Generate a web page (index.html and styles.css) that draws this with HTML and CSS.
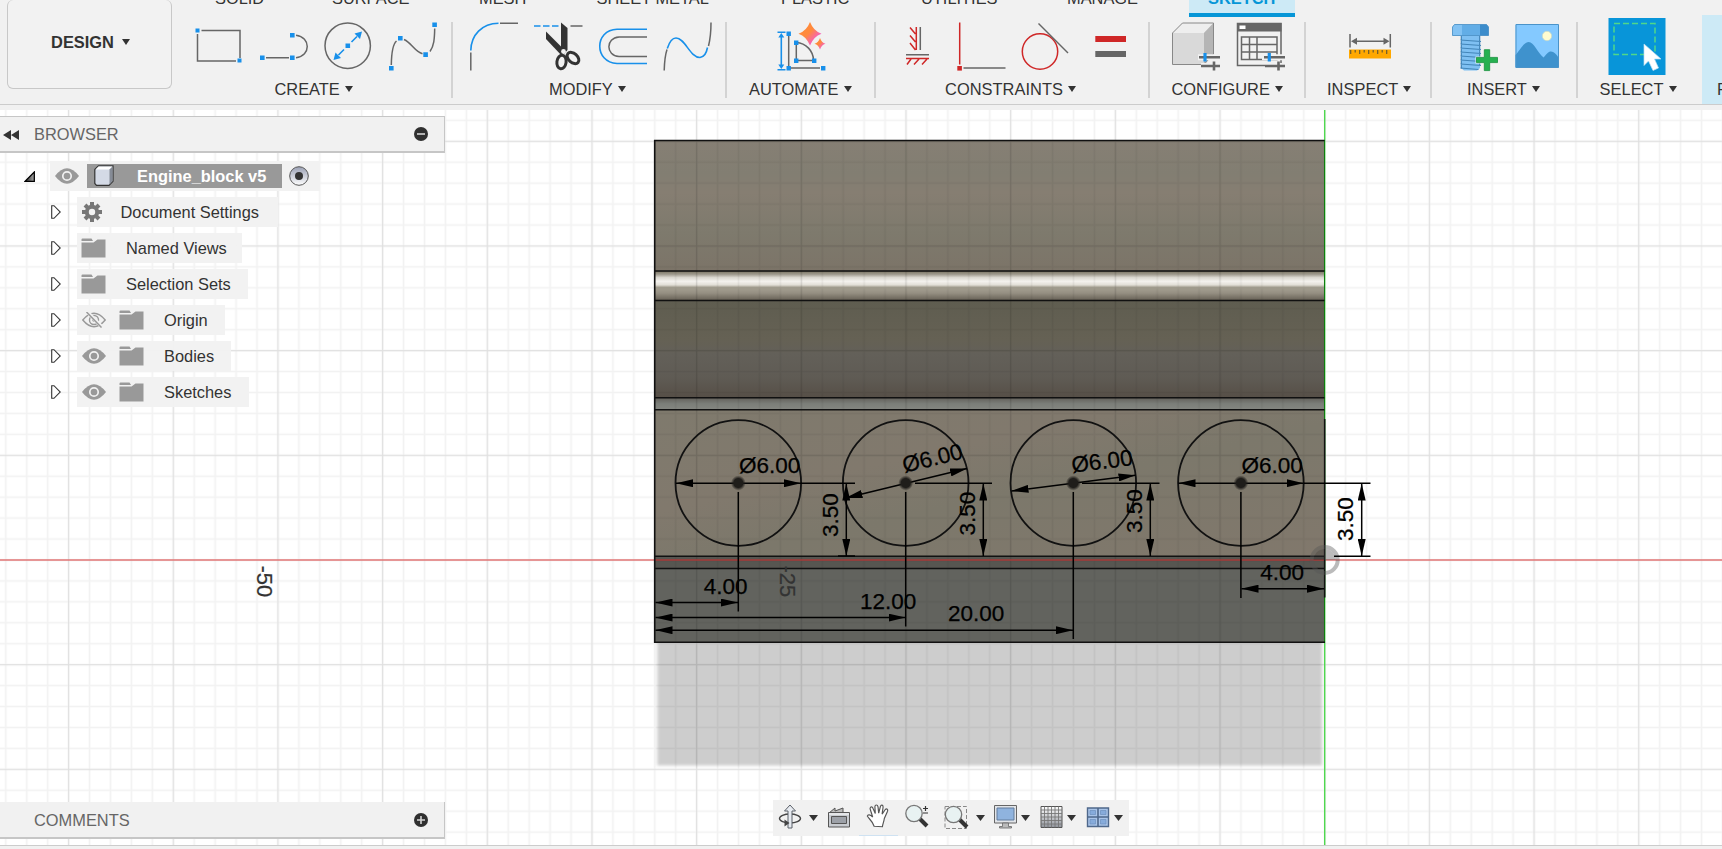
FILE: index.html
```html
<!DOCTYPE html>
<html lang="en">
<head>
<meta charset="utf-8">
<title>Engine_block v5</title>
<link rel="stylesheet" href="styles.css">
</head>
<body>
<header class="toolbar">
  <div class="workspace">
    <button class="workspace-btn">DESIGN<i class="caret"></i></button>
  </div>
  <div class="ribbon">
    <nav class="tabs">
      <span class="tab t-solid">SOLID</span><span class="tab t-surface">SURFACE</span><span class="tab t-mesh">MESH</span><span class="tab t-sheet">SHEET METAL</span><span class="tab t-plastic">PLASTIC</span><span class="tab t-util">UTILITIES</span><span class="tab t-manage">MANAGE</span><span class="tab t-sketch">SKETCH</span>
    </nav>
    <div class="groups">
      <section class="group g-create">
        <div class="icons">
          <svg class="ic65" viewBox="187 17 65 60"><path d="M201.500 30.500H240V58M236 61H197.500V34" class="g"/><path d="M195.500 28.500h4v4h-4zM237.500 58.500h4v4h-4z" class="bf"/></svg>
          <svg class="ic65" viewBox="252 17 65 60"><path d="M266 57.700H289M296 57.700C311 56 311 37 296 35.200" class="g"/><path d="M260 55.500h4.600v4.600H260zM290 55.500h4.600v4.600H290zM290 33h4.600v4.600H290z" class="bf"/></svg>
          <svg class="ic65" viewBox="317 17 65 60"><circle cx="347.700" cy="45.700" r="22.700" class="g"/><path d="M351.500 42L357 36.500M344 49.500L338.500 55" class="b"/><path d="M345.500 43.500h4.600v4.600h-4.600zM362 31.500l-7.500 2 5.500 5.500zM333.500 60l7.500-2-5.500-5.500z" class="bf"/></svg>
          <svg class="ic65" viewBox="382 17 65 60"><path d="M391.300 65C391.500 52 393 44 396.500 41M404 39.500C412 43 414 51 422.500 53.700M430 51.500C434 46 434.500 39 434.700 28.500" class="g"/><path d="M389 66h4.600v4.600H389zM398 36h4.600v4.600H398zM423.300 52.300h4.600v4.600h-4.600zM432.300 22.500h4.600v4.600h-4.600z" class="bf"/></svg>
        </div>
        <div class="label">CREATE<i class="caret"></i></div>
      </section>
      <section class="group g-modify">
        <div class="icons">
          <svg class="ic65" viewBox="461 17 65 60"><path d="M470.800 50.500C471 35 482 23.300 498.500 23.200" class="b"/><path d="M500 23.200h18M470.800 52.500V70.500" class="g"/></svg>
          <svg class="ic65" viewBox="526 17 65 60"><path d="M534 26h26" class="b" stroke-dasharray="6.500 2.500"/><path d="M570.500 26h12" class="g"/><path d="M561 22.500l6.500 5.500V50L564 54l-3-2z" class="k"/><path d="M546 31.500l18 18-2 6.500-16-17z" class="k"/><circle cx="563.500" cy="51.500" r="2.400" fill="#f1f1f1"/><g fill="none" stroke="#333" stroke-width="3"><ellipse cx="561.500" cy="62" rx="4.600" ry="6.800" transform="rotate(8 561.500 62)"/><ellipse cx="573" cy="58" rx="4.500" ry="6.800" transform="rotate(-48 573 58)"/></g></svg>
          <svg class="ic65" viewBox="591 17 65 60"><path d="M647 29.300H617C594 30 594 62.500 617 63.500H647" class="b"/><path d="M647 37H619C605.500 38 605.500 55.500 619 56.500H647" class="g"/></svg>
          <svg class="ic65" viewBox="656 17 65 60"><path d="M667.300 48.500C670 40 673 38 676 38C685 38 690 57.500 700 57.500C704 57 706.500 53 707.500 47.500" class="b"/><path d="M664.200 70.500C664.500 60 665.500 54 667 49.500M708.500 46C710.500 38 711 32 711 22.500" class="g"/></svg>
        </div>
        <div class="label">MODIFY<i class="caret"></i></div>
      </section>
      <section class="group g-automate">
        <div class="icons">
          <svg class="ic64" viewBox="769 17 64 60"><defs><linearGradient id="spark" x1="0" y1="0" x2="1" y2="1"><stop offset=".45" stop-color="#ff8a3c"/><stop offset=".75" stop-color="#f65fc0"/></linearGradient></defs><path d="M788.700 36V68H820M796.300 42.500V60.500H813.500C813.500 51 806 43 796.300 42.500" class="g"/><path d="M777.500 32.300h8M777.500 69.700h8M781.300 36v30" class="b"/><path d="M786.500 31.500h4.400v4.400h-4.400zM786.500 66h4.400v4.400h-4.400zM821 66h4.400v4.400H821zM794 40.500h4.400v4.400H794zM794 58.500h4.400v4.400H794zM812 58.500h4.400v4.400H812zM781.300 33l-3 4.500h6zM781.300 69l-3-4.500h6z" class="bf"/><path d="M810 22Q813.500 31 821.500 33.700Q813.500 36.500 810 45.500Q806.500 36.500 798.500 33.700Q806.500 31 810 22z" fill="url(#spark)"/><path d="M820 38Q821.500 42.500 825.500 43.700Q821.500 45 820 49.500Q818.500 45 814.500 43.700Q818.500 42.500 820 38z" fill="url(#spark)"/></svg>
        </div>
        <div class="label">AUTOMATE<i class="caret"></i></div>
      </section>
      <section class="group g-constraints">
        <div class="icons">
          <svg class="ic64" viewBox="885 17 64 60"><path d="M916.300 27V50M915.500 34l-5.500-6.500M915.500 42l-5.500-6.500M915.500 50l-5.500-7M906 58.500H929M911 59l-4 5.500M919 59l-5 5.500M927 59l-5 5.500" class="r"/><path d="M920.300 27V50M906 54.700H929" class="g"/></svg>
          <svg class="ic64" viewBox="949 17 64 60"><path d="M959.700 22.500V64.500" class="r"/><path d="M957.300 66h4.600v4.600h-4.600z" fill="#cf2727"/><path d="M963.500 68H1005.500" class="g"/></svg>
          <svg class="ic64" viewBox="1013 17 64 60"><circle cx="1040" cy="51.500" r="17.700" class="r"/><path d="M1038.500 23.500L1068 53" class="g"/></svg>
          <svg class="ic64" viewBox="1077 17 64 60"><path d="M1095.300 36H1126v6h-30.700z" fill="#cf2727"/><path d="M1095.300 51H1126v6h-30.700z" fill="#666"/></svg>
        </div>
        <div class="label">CONSTRAINTS<i class="caret"></i></div>
      </section>
      <section class="group g-configure">
        <div class="icons">
          <svg class="ic64" viewBox="1164 17 64 60"><path d="M1172.500 33l10-10h31v31l-9.500 10.500h-31.500z" fill="#d9d9d9"/><path d="M1172.500 33l10-10h31L1204 33z" fill="#eee"/><path d="M1213.500 23v31l-9.500 10V33z" fill="#b5b5b5"/><path d="M1172.500 33l10-10h31v31l-9.500 10.500h-31.500z" fill="none" stroke="#888"/><path d="M1198 57.300h23M1201 66h20" stroke="#f1f1f1" stroke-width="6"/><path d="M1199 57.300h21M1201 66h19M1214 61.500v9" stroke="#666" stroke-width="2.600"/><path d="M1205 53v8.500" stroke="#1890ea" stroke-width="3.200"/></svg>
          <svg class="ic64" viewBox="1228 17 64 60"><rect x="1237.500" y="23.500" width="43.500" height="42" class="g"/><path d="M1237 23h44.500v8.500H1237z" fill="#666"/><path d="M1239.500 25.500h6v3.500h-6z" fill="#fff"/><path d="M1241.500 37H1277v22.500h-35.500zM1241.500 44.500H1277M1241.500 52H1277M1249.500 37v22.500M1257 37v22.500" class="g"/><path d="M1262 57.300h23M1265 66h20" stroke="#f1f1f1" stroke-width="6"/><path d="M1264 57.300h21M1265 66h20M1278.500 61.500v9" stroke="#666" stroke-width="2.600"/><path d="M1269.300 53v8.500" stroke="#1890ea" stroke-width="3.200"/></svg>
        </div>
        <div class="label">CONFIGURE<i class="caret"></i></div>
      </section>
      <section class="group g-inspect">
        <div class="icons">
          <svg class="ic64" viewBox="1337 17 64 60"><path d="M1350 34v13.500M1390.300 34v13.500M1354 41.300h32" class="g"/><path d="M1351 41.300l6-3.500v7zM1389.500 41.300l-6-3.500v7z" fill="#666"/><path d="M1349 49.500h42v9h-42z" fill="#ffa800"/><path d="M1350.700 50v4M1355.200 50v2.500M1359.700 50v4M1364.200 50v2.500M1368.700 50v4M1373.200 50v2.500M1377.700 50v4M1382.200 50v2.500M1386.700 50v4" stroke="#6b5a30" stroke-width="1.200"/></svg>
        </div>
        <div class="label">INSPECT<i class="caret"></i></div>
      </section>
      <section class="group g-insert">
        <div class="icons">
          <svg class="ic64" viewBox="1443 17 64 60"><path d="M1461 35h19v33l-3 2.500h-13l-3-2.500z" fill="#7fc0f2"/><path d="M1452.500 27l2-2.500h32l2 2.500v8.500h-36z" fill="#62ade6"/><path d="M1452.500 27l2-2.500h7.500v11h-9.500z" fill="#82c2f3"/><path d="M1480 24.500h6.500l2 2.500v8.500h-8.500z" fill="#3c8ccb"/><path d="M1452.500 27l2-2.500h32l2 2.500v8.500h-36z" fill="none" stroke="#4a8fc4" stroke-width=".8"/><path d="M1460.500 40l20.500 1.500M1460.500 44l20.500 1.500M1460.500 48l20.500 1.500M1460.500 52l20.500 1.500M1460.500 56l20.500 1.500M1460.500 60l20.500 1.500M1460.500 64l20.500 1.500M1460.500 68l18 1.500M1461.300 36v33M1479.700 36v30" stroke="#4385b8" stroke-width="1.200" fill="none"/><path d="M1483.500 48.500h7v8h8v7h-8v8h-7v-8h-8v-7h8z" fill="#f1f1f1"/><path d="M1484.300 49.700h5.400v7.700h7.800v5.200h-7.800v8h-5.400v-8h-7.800v-5.200h7.800z" fill="#26b050" stroke="#15903b" stroke-width=".8"/></svg>
          <svg class="ic64" viewBox="1507 17 64 60"><path d="M1515.500 24.500H1558.500V67.500H1515.500z" fill="#84c9ff"/><path d="M1515.500 55C1521 49 1524 42 1528.700 42C1534 42 1537 52 1543.500 57.500C1547 54 1548 51.500 1551 51.500C1554 51.500 1556 54 1558.500 57.500V67.500H1515.500z" fill="#3f92cd"/><path d="M1516 24.500H1558.500V67.500H1516z" fill="none" stroke="#4a93c9"/><circle cx="1547" cy="36" r="4.700" fill="#fffcd0" stroke="#c6d9c6" stroke-width=".7"/></svg>
        </div>
        <div class="label">INSERT<i class="caret"></i></div>
      </section>
      <section class="group g-select">
        <div class="icons">
          <svg class="ic64" viewBox="1605 17 64 60"><path d="M1608.500 18h57v57h-57z" fill="#0895d9"/><path d="M1614 23.500h41v31h-41z" fill="none" stroke="#4fd889" stroke-width="1.500" stroke-dasharray="6 3"/><path d="M1644 44V65.500L1648.500 61L1653 70.500L1658.500 68L1654.500 59H1661z" fill="#fff" stroke="#b9def2" stroke-width=".7"/></svg>
        </div>
        <div class="label">SELECT<i class="caret"></i></div>
      </section>
      <section class="finish"><div class="label">FINISH</div></section>
    </div>
  </div>
</header>

<main class="viewport">
  <svg class="scene" viewBox="0 110 1722 735">
    <defs>
      <pattern id="minor" x="1314.200" y="549.500" width="20.935" height="20.935" patternUnits="userSpaceOnUse"><path d="M10.500 0V20.935M0 10.500H20.935" stroke="#000" stroke-opacity=".052" stroke-width="1.600"/></pattern>
      <pattern id="major" x="1272.300" y="507.600" width="104.675" height="104.675" patternUnits="userSpaceOnUse"><path d="M52.400 0V104.675M0 52.400H104.675" stroke="#000" stroke-opacity=".075" stroke-width="1.200"/></pattern>
      <linearGradient id="topFace" x2="0" y2="1"><stop stop-color="#867f74"/><stop offset=".25" stop-color="#827e72"/><stop offset=".4" stop-color="#867e72"/><stop offset=".7" stop-color="#7e7a6d"/><stop offset="1" stop-color="#7c7468"/></linearGradient>
      <linearGradient id="shine" x2="0" y2="1"><stop stop-color="#77715f"/><stop offset=".12" stop-color="#a39e92"/><stop offset=".22" stop-color="#dad7cf"/><stop offset=".35" stop-color="#f4f2ee"/><stop offset=".47" stop-color="#e2dfd7"/><stop offset=".55" stop-color="#a7a294"/><stop offset=".75" stop-color="#958f82"/><stop offset="1" stop-color="#655f54"/></linearGradient>
      <linearGradient id="midFace" x2="0" y2="1"><stop stop-color="#5f5d50"/><stop offset=".4" stop-color="#656154"/><stop offset=".55" stop-color="#636059"/><stop offset=".8" stop-color="#5f5b54"/><stop offset="1" stop-color="#564f47"/></linearGradient>
      <linearGradient id="band" x2="0" y2="1"><stop stop-color="#625f59"/><stop offset=".5" stop-color="#7b7e79"/><stop offset="1" stop-color="#858781"/></linearGradient>
      <linearGradient id="lowFace" x2="1" y2="1"><stop stop-color="#7f7a6d"/><stop offset=".35" stop-color="#81796d"/><stop offset=".55" stop-color="#7c786b"/><stop offset="1" stop-color="#81786c"/></linearGradient>
      <filter id="soft" x="-5%" y="-10%" width="110%" height="120%"><feGaussianBlur stdDeviation="1.800"/></filter>
      <marker id="arr" viewBox="0 0 17 8" refX="17" refY="4" markerWidth="17" markerHeight="8" markerUnits="userSpaceOnUse" orient="auto-start-reverse"><path d="M0 0L17 4L0 8z"/></marker>
      <radialGradient id="dot"><stop offset=".6" stop-color="#1f1d1a"/><stop offset="1" stop-color="#1f1d1a" stop-opacity="0"/></radialGradient>
    </defs>
    <path d="M657.300 636H1322V765.500H657.300z" fill="#cdcdcd" filter="url(#soft)"/>
    <path d="M655 140.500H1324.500V271H655z" fill="url(#topFace)"/>
    <path d="M655 271H1324.500V300.500H655z" fill="url(#shine)"/>
    <path d="M655 300.500H1324.500V397.500H655z" fill="url(#midFace)"/>
    <path d="M655 397.500H1324.500V410H655z" fill="url(#band)"/>
    <path d="M655 410H1324.500V556H655z" fill="url(#lowFace)"/>
    <path d="M655 556H1324.500V568.500H655z" fill="#575651"/>
    <path d="M655 568.500H1324.500V642H655z" fill="#62635e"/>
    <path d="M0 110H1722V845H0z" fill="url(#minor)"/>
    <path d="M0 110H1722V845H0z" fill="url(#major)"/>
    <path d="M0 560H1722" stroke="#e02c2c" stroke-opacity=".45" stroke-width="2"/>
    <path d="M1324.700 110V845" stroke="#4fd84f" stroke-width="1.400"/>
    <path d="M1324.500 140V419M1324.500 597V642" stroke="#0e7c0e" stroke-width="1"/>
    <g fill="none" stroke="#111" stroke-width="1.600">
      <path d="M1324.500 140.500H654.700V642.300H1325"/>
      <path d="M655 271H1324.500M655 300.500H1324.500M655 397.800H1324.500M655 409.800H1324.500M655 556.200H1324.500M655 568.500H1324.500" stroke-width="1.500"/>
      <path d="M1324.700 419V597.500"/>
      <g stroke-width="1.800"><circle cx="738.300" cy="483" r="62.800"/><circle cx="905.700" cy="483" r="62.800"/><circle cx="1073.300" cy="483" r="62.800"/><circle cx="1240.900" cy="483" r="62.800"/></g>
    </g>
    <circle cx="1324.700" cy="560" r="13" fill="none" stroke="#555" stroke-opacity=".4" stroke-width="4"/>
    <path d="M1324.700 560V549A11 11 0 0 1 1335.700 560z" fill="#555" fill-opacity=".4"/>
    <path d="M1324.700 560H1313.700A11 11 0 0 1 1324.700 549z" fill="#333" fill-opacity=".4"/>
    <g fill="none" stroke="#000" stroke-width="1.500">
      <path d="M801 483.200H855M915 483.200H992M1082 483.200H1159.500M1304 483.200H1370.500M838 556H855M1334 556.200H1370.500"/>
      <path d="M738.300 492V611.500M905.700 492V626.500M1073.300 492V639M1240.900 492V598"/>
      <g marker-start="url(#arr)" marker-end="url(#arr)">
        <path d="M676 483.200H801"/><path d="M845.500 498L967 468.500"/><path d="M1011.500 491L1135.500 475.300"/><path d="M1178.500 483.200H1303.500"/>
        <path d="M846.300 483.500V556"/><path d="M983.300 483.500V556"/><path d="M1150.300 483.500V556"/><path d="M1361.700 483.500V556"/>
        <path d="M655.500 602.600H738"/><path d="M655.500 617.600H905.500"/><path d="M655.500 630.200H1073"/><path d="M1241.500 588.700H1324"/>
      </g>
    </g>
    <circle cx="738.300" cy="483" r="7.500" fill="url(#dot)"/><circle cx="905.700" cy="483" r="7.500" fill="url(#dot)"/><circle cx="1073.300" cy="483" r="7.500" fill="url(#dot)"/><circle cx="1240.900" cy="483" r="7.500" fill="url(#dot)"/>
    <g class="dim">
      <text x="739" y="473.300">Ø6.00</text>
      <text transform="translate(904.500 472.800) rotate(-13.800)">Ø6.00</text>
      <text transform="translate(1072.500 472.800) rotate(-7.300)">Ø6.00</text>
      <text x="1241.400" y="473.300">Ø6.00</text>
      <text transform="translate(838 537) rotate(-90)">3.50</text>
      <text transform="translate(974.600 535.500) rotate(-90)">3.50</text>
      <text transform="translate(1142 533) rotate(-90)">3.50</text>
      <text transform="translate(1352.700 541) rotate(-90)">3.50</text>
      <text x="703.800" y="594">4.00</text><text x="860" y="609.300">12.00</text><text x="948" y="621.300">20.00</text><text x="1260.300" y="580.300">4.00</text>
    </g>
    <g class="ruler"><text transform="translate(256.700 565.500) rotate(90)">-50</text><text transform="translate(780.200 565.500) rotate(90)">-25</text></g>
  </svg>

  <aside class="panels">
    <div class="panel-bar browser"><svg class="rewind" viewBox="0 0 16 10"><path d="M8 0v10L0 5zM16 0v10L8 5z" fill="#333"/></svg><span>BROWSER</span><svg class="round" viewBox="0 0 14 14"><circle cx="7" cy="7" r="7" fill="#303030"/><path d="M3 7h8" stroke="#d5d5d5" stroke-width="1.600"/></svg></div>
    <div class="tree">
      <div class="row root">
        <svg class="tri" viewBox="0 0 11 11"><defs><linearGradient id="tg"><stop stop-color="#222"/><stop offset="1" stop-color="#aaa"/></linearGradient></defs><path d="M10.300 1V10.300H1z" fill="url(#tg)" stroke="#000" stroke-width="1.300"/></svg>
        <div class="chip">
          <svg class="eye" viewBox="0 0 24 16"><use href="#eye"/></svg>
          <div class="doc"><svg class="cube" viewBox="0 0 20 21"><path d="M.8 4.500L4.500.8H19v15.500l-4 4H2.500L.8 18.500z" fill="#d4dae6" stroke="#333" stroke-width="1.200"/><path d="M1.500 4.500L4.500 1.500h14L15.500 4.500z" fill="#fff"/><path d="M18.500 1.500v14.500l-3 3.500V4.500z" fill="#858b96"/></svg><b>Engine_block v5</b></div>
          <svg class="radio" viewBox="0 0 20 20"><defs><linearGradient id="rg" x2="0" y2="1"><stop stop-color="#9aa0b4"/><stop offset="1" stop-color="#fff"/></linearGradient></defs><circle cx="10" cy="10" r="9.300" fill="url(#rg)" stroke="#555"/><circle cx="10" cy="10" r="4" fill="#333"/></svg>
        </div>
      </div>
      <div class="row"><svg class="exp" viewBox="0 0 10 14"><use href="#exp"/></svg><div class="chip c1"><svg class="gear" viewBox="-10 -10 20 20"><circle r="5.200" fill="none" stroke="#777" stroke-width="4"/><path d="M0-10V-6M0 6V10M-10 0H-6M6 0H10M-7-7L-4.500-4.500M7 7L4.500 4.500M-7 7L-4.500 4.500M7-7L4.500-4.500" stroke="#777" stroke-width="4"/></svg><span>Document Settings</span></div></div>
      <div class="row"><svg class="exp" viewBox="0 0 10 14"><use href="#exp"/></svg><div class="chip c2"><svg class="folder" viewBox="0 0 25 20"><use href="#folder"/></svg><span>Named Views</span></div></div>
      <div class="row"><svg class="exp" viewBox="0 0 10 14"><use href="#exp"/></svg><div class="chip c3"><svg class="folder" viewBox="0 0 25 20"><use href="#folder"/></svg><span>Selection Sets</span></div></div>
      <div class="row"><svg class="exp" viewBox="0 0 10 14"><use href="#exp"/></svg><div class="chip c4"><svg class="eye" viewBox="0 0 24 16"><path d="M.8 8Q12-5.500 23.200 8Q12 21.500 .8 8z" fill="none" stroke="#999" stroke-width="1.400"/><circle cx="12" cy="8" r="4.500" fill="none" stroke="#999" stroke-width="1.400"/><circle cx="12" cy="8" r="1.800" fill="#999"/><path d="M5.500 0L20.500 15.500" stroke="#f1f1f1" stroke-width="3.500"/><path d="M4.500 0L19.500 15.500" stroke="#999" stroke-width="1.500"/></svg><svg class="folder f2" viewBox="0 0 25 20"><use href="#folder"/></svg><span>Origin</span></div></div>
      <div class="row"><svg class="exp" viewBox="0 0 10 14"><use href="#exp"/></svg><div class="chip c5"><svg class="eye" viewBox="0 0 24 16"><use href="#eye"/></svg><svg class="folder f2" viewBox="0 0 25 20"><use href="#folder"/></svg><span>Bodies</span></div></div>
      <div class="row"><svg class="exp" viewBox="0 0 10 14"><use href="#exp"/></svg><div class="chip c6"><svg class="eye" viewBox="0 0 24 16"><use href="#eye"/></svg><svg class="folder f2" viewBox="0 0 25 20"><use href="#folder"/></svg><span>Sketches</span></div></div>
    </div>
    <div class="panel-bar comments"><span>COMMENTS</span><svg class="round" viewBox="0 0 14 14"><circle cx="7" cy="7" r="7" fill="#303030"/><path d="M3 7h8M7 3v8" stroke="#d5d5d5" stroke-width="1.600"/></svg></div>
  </aside>

  <div class="navbar">
    <svg width="50" height="36" viewBox="773 800 50 36"><ellipse cx="790" cy="818.500" rx="10.500" ry="4.500" fill="none" stroke="#444" stroke-width="1.400"/><path d="M788 828V811h-3.500l5.500-6 5.500 6H792V828z" fill="#e7ebf1" stroke="#5b6068"/><path d="M784.500 819.500l5 3.500-5 3.500z" fill="#444"/><path d="M809 815h9l-4.500 6z" class="k"/></svg>
    <svg width="36" height="36" viewBox="823 800 36 36"><path d="M829 813l6-5v3l8-3v5" fill="#bbb" stroke="#555"/><path d="M828.500 812.500h21v14.500h-21z" fill="#c9ccd1" stroke="#555"/><path d="M831.500 816.500h15v7h-15z" fill="#9da1a8" stroke="#555"/><path d="M829 814h20" stroke="#fff"/></svg>
    <svg class="hand" width="39" height="36" viewBox="859 800 39 36"><path d="M874 827C872 821 868.500 819.500 867 816.500C867.500 814.500 870 815 872.500 817.500L869.800 809C870 806.500 872 806.500 872.800 808.500L875.200 814L874.800 807C875 804.500 877.500 804.500 878 807L878.700 813.500L880.500 806.500C881.200 804.500 883.500 805 883.200 807.500L882.200 814.500L885.500 809.800C887 808.300 888.500 809.800 887.800 811.500L884.500 819C884 822.500 883 824 882.500 827.500z" fill="#fff" stroke="#555" stroke-width="1.200"/></svg>
    <svg width="38" height="36" viewBox="898 800 38 36"><path d="M920 819l7 7" stroke="#333" stroke-width="4"/><circle cx="914" cy="813.500" r="8.200" fill="#e8f2f2" stroke="#777" stroke-width="1.300"/><path d="M923 808.500h5M925.500 806v5M923 813h5" stroke="#333" stroke-width="1.200"/></svg>
    <svg width="53" height="36" viewBox="936 800 53 36"><path d="M945 806.500h21.500v22H945z" fill="none" stroke="#888" stroke-dasharray="4 2"/><path d="M959 819l8 8" stroke="#333" stroke-width="4"/><circle cx="953.500" cy="814.500" r="8.200" fill="#e8f2f2" stroke="#777" stroke-width="1.300"/><path d="M976 815h9l-4.500 6z" class="k"/></svg>
    <svg width="46" height="36" viewBox="989 800 46 36"><path d="M994.500 805.500h22v17.500h-22z" fill="#e1e4e8" stroke="#666"/><path d="M997 808h17v12h-17z" fill="#8fb3de" stroke="#637c9d"/><path d="M1002.500 823h6v3.500h3v1.500h-12v-1.500h3z" fill="#bbb" stroke="#666" stroke-width=".8"/><path d="M1021 815h9l-4.500 6z" class="k"/></svg>
    <svg width="47" height="36" viewBox="1035 800 47 36"><defs><linearGradient id="ng" x2="0" y2="1"><stop stop-color="#fff"/><stop offset="1" stop-color="#90949c"/></linearGradient></defs><path d="M1041 806.500h21v21h-21z" fill="url(#ng)" stroke="#555"/><path d="M1044.500 806.500v21M1048 806.500v21M1051.500 806.500v21M1055 806.500v21M1058.500 806.500v21M1041 810h21M1041 813.500h21M1041 817h21M1041 820.500h21M1041 824h21" stroke="#777" stroke-width=".9"/><path d="M1067 815h9l-4.500 6z" class="k"/></svg>
    <svg width="47" height="36" viewBox="1082 800 47 36"><path d="M1087.500 808h21v18.500h-21z" fill="#a9c4e8" stroke="#4f688b" stroke-width="1.400"/><path d="M1098 808v18.500M1087.500 817h21" stroke="#4f688b" stroke-width="1.600"/><path d="M1090 810.500h5.500v4H1090zM1100.500 810.500h5.500v4h-5.500zM1090 819.500h5.500v4.500H1090zM1100.500 819.500h5.500v4.500h-5.500z" fill="#86abdb" stroke="#6d8fbd" stroke-width=".7"/><path d="M1114 815h9l-4.500 6z" class="k"/></svg>
  </div>
</main>
<footer class="status"></footer>

<svg class="symbols" width="0" height="0">
  <symbol id="eye" viewBox="0 0 24 16"><path d="M0 8Q12-7.500 24 8Q12 23.500 0 8z" fill="#999"/><circle cx="12" cy="8" r="4.200" fill="none" stroke="#f1f1f1" stroke-width="1.700"/></symbol>
  <symbol id="folder" viewBox="0 0 25 20"><path d="M.5 1.500Q.5.500 1.500.500H10.500L12 3H.5zM.5 4.500H12.500L16.500 1.500H24.500V19.500H.5z" fill="#999"/></symbol>
  <symbol id="exp" viewBox="0 0 10 14"><path d="M.7 .7H3L9.300 7L3 13.300H.7z" fill="#fff" stroke="#333" stroke-width="1.100"/></symbol>
</svg>
</body>
</html>
```
FILE: styles.css
```css
* { box-sizing: border-box; }
body {
  margin: 0;
  width: 1722px;
  height: 849px;
  overflow: hidden;
  display: flex;
  flex-direction: column;
  background: #f1f1f1;
  color: #333;
  font: 16.4px/20px "Liberation Sans", Arial, sans-serif;
}
svg { display: block; flex: none; }
.symbols { position: absolute; }

/* stroke and fill roles shared by the icons */
.g { fill: none; stroke: #666; stroke-width: 1.5; }
.b { fill: none; stroke: #1890ea; stroke-width: 1.6; }
.r { fill: none; stroke: #cf2727; stroke-width: 1.5; }
.bf { fill: #1890ea; }
.k { fill: #333; }

.caret {
  display: inline-block;
  border: 4.5px solid transparent;
  border-width: 6px 4.5px 0;
  border-top-color: #333;
  margin-left: 5px;
  vertical-align: 3px;
}

/* toolbar */
.toolbar { display: flex; height: 110px; flex: none; }
.workspace { width: 172px; height: 105px; border-bottom: 1px solid #ccc; padding-left: 7px; }
.workspace-btn {
  width: 165px;
  height: 89px;
  border: 1px solid #c8c8c8;
  border-top: 0;
  border-radius: 6px;
  background: #f2f2f2;
  color: #333;
  font: bold 16.4px/20px "Liberation Sans", Arial, sans-serif;
  padding: 0 0 5px 2px;
}
.workspace-btn .caret { margin-left: 8px; }
.ribbon { width: 1550px; height: 105px; border-bottom: 1px solid #ccc; display: flex; flex-direction: column; }
.tabs { display: flex; height: 17px; padding-left: 24px; flex: none; }
.tab { padding-left: 19px; line-height: 0; margin-top: -2px; height: 19px; white-space: nowrap; }
.t-solid { width: 117px; }
.t-surface { width: 147px; }
.t-mesh { width: 117.5px; }
.t-sheet { width: 184.5px; }
.t-plastic { width: 140px; }
.t-util { width: 146px; }
.t-manage { width: 141px; }
.t-sketch { width: 106px; background: #cdeaf6; border-bottom: 4px solid #0696d7; color: #0696d7; font-weight: bold; }
.groups { display: flex; height: 87px; }
.group { position: relative; height: 87px; flex: none; }
.group::after { content: ""; position: absolute; right: 0; top: 5px; width: 2px; height: 76px; background: #d3d3d3; }
.g-select::after { display: none; }
.icons { display: flex; height: 60px; }
.ic65 { width: 65px; height: 60px; }
.ic64 { width: 64px; height: 60px; }
.label { margin-top: 2px; white-space: nowrap; }
.g-create { width: 281px; padding-left: 15px; }
.g-create .label { padding-left: 87.5px; }
.g-modify { width: 274px; padding-left: 8px; }
.g-modify .label { padding-left: 88px; }
.g-automate { width: 149px; padding-left: 42px; }
.g-automate .label { margin-left: -20px; }
.g-constraints { width: 274px; padding-left: 9px; }
.g-constraints .label { padding-left: 60px; letter-spacing: .05px; }
.g-configure { width: 156px; padding-left: 14px; }
.g-configure .label { padding-left: 7.5px; }
.g-inspect { width: 126px; padding-left: 31px; }
.g-inspect .label { margin-left: -10px; letter-spacing: .05px; }
.g-insert { width: 146px; padding-left: 11px; }
.g-insert .label { padding-left: 24px; }
.g-select { width: 124px; padding-left: 27px; }
.g-select .label { margin-left: -5.5px; letter-spacing: .05px; }
.finish { width: 22px; background: #cdeaf6; padding: 60px 0 0 15px; overflow: hidden; box-shadow: 0 -2px #cdeaf6; }

/* modelling canvas */
.viewport { position: relative; height: 735px; flex: none; background: #fff; overflow: hidden; }
.scene { position: absolute; inset: 0; width: 1722px; height: 735px; }
.dim { font-size: 22.5px; fill: #000; stroke: #000; stroke-width: .25px; }
.ruler { font-size: 22px; fill: #333; stroke: #333; stroke-width: .2px; }

/* browser and comments panels */
.panels { position: relative; width: 445px; height: 735px; padding: 6px 0; display: flex; flex-direction: column; }
.panel-bar {
  display: flex;
  align-items: center;
  height: 37px;
  flex: none;
  padding-right: 16px;
  background: #f1f1f1;
  border: 1px solid #c6c6c6;
  border-left: 0;
  border-bottom-width: 2px;
  color: #666;
}
.panel-bar span { margin-right: auto; padding-bottom: 1px; }
.rewind { width: 16px; height: 10px; margin: 2px 15px 0 3px; }
.round { width: 14px; height: 14px; }
.comments { margin-top: auto; padding-left: 34px; border-top: 0; }
.comments span { padding-bottom: 0; }
.tree { padding-top: 8px; display: flex; flex-direction: column; gap: 6px; }
.row { display: flex; align-items: center; height: 30px; padding-left: 51px; }
.chip { display: flex; align-items: center; height: 30px; margin-left: 16px; padding-left: 4.5px; background: rgba(241, 241, 241, .96); white-space: nowrap; }
.exp { width: 10px; height: 14px; }
.root { padding-left: 24px; }
.root .chip { margin-left: 15px; width: 270px; }
.tri { width: 11px; height: 11px; }
.doc { display: flex; align-items: center; width: 195px; height: 24px; margin-left: 8.5px; padding-left: 7px; background: #999; color: #fff; }
.doc b { margin-left: 23px; }
.cube { width: 20px; height: 21px; margin-bottom: 2px; }
.radio { width: 20px; height: 20px; margin-left: 7px; margin-bottom: 1px; }
.eye { width: 24px; height: 16px; }
.folder { width: 25px; height: 20px; margin-left: -1px; }
.f2 { margin-left: 13px; }
.gear { width: 20px; height: 20px; }
.c1 { width: 201px; }
.c1 span { margin-left: 19px; }
.c2 { width: 165px; }
.c3 { width: 171px; }
.c4 { width: 148px; }
.c5 { width: 154px; }
.c6 { width: 172px; }
.c2 span, .c3 span, .c4 span, .c5 span, .c6 span { margin-left: 20.5px; }

/* view controls float over the canvas */
.navbar { position: absolute; left: 773px; top: 690px; display: flex; height: 36px; background: #f1f1f1; }
.hand { border-bottom: 1px solid #cfe2f2; }
.status { height: 4px; border-top: 1px solid #ccc; background: #f1f1f1; }
```
